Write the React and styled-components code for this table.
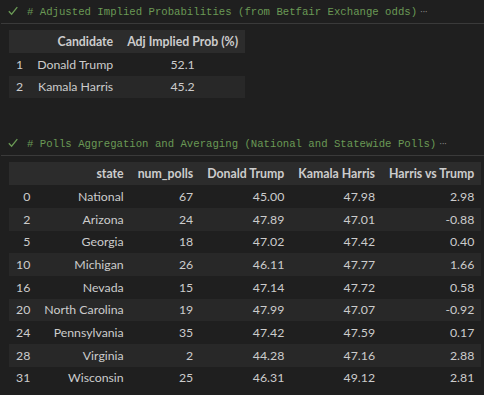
import React from 'react';
import styled, { createGlobalStyle } from 'styled-components';

const GlobalStyle = createGlobalStyle`
  html, body {
    margin: 0;
    padding: 0;
    background: #1f1f1f;
  }
  body {
    width: 484px;
    height: 395px;
    overflow: hidden;
  }
`;

const Page = styled.div`
  display: flex;
  flex-direction: column;
  gap: 34px;
`;

const Cell = styled.section`
  display: flex;
  flex-direction: column;
`;

const CellHeader = styled.div`
  display: flex;
  align-items: center;
  height: 23px;
  padding-left: 7px;
  border-bottom: 1px solid #3a3a3a;
  margin-left: 1px;
`;

const Check = styled.svg`
  width: 10px;
  height: 10px;
  margin-right: 9px;
  margin-top: -1px;
  flex-shrink: 0;
`;

const Comment = styled.span`
  font-family: 'Liberation Mono', 'DejaVu Sans Mono', monospace;
  font-size: 10.67px;
  color: #6a9955;
  white-space: pre;
`;

const More = styled.span`
  font-family: 'DejaVu Sans', sans-serif;
  font-size: 9px;
  color: #8a8a8a;
  margin-left: 3px;
  letter-spacing: -0.5px;
`;

const Output = styled.div`
  padding: 6px 0 0 9px;
`;

const Table = styled.table`
  border-collapse: collapse;
  font-family: Lato, 'Segoe UI', sans-serif;
  font-size: 12.3px;
  color: #cccccc;
`;

const Th = styled.th`
  background: #2c2c2c;
  font-weight: bold;
  text-align: ${(p) => p.align || 'right'};
  padding: 0 7px;
  height: 23px;
  white-space: nowrap;
`;

const Row = styled.tr`
  background: ${(p) => (p.striped ? '#282828' : 'transparent')};
`;

const Td = styled.td`
  text-align: ${(p) => p.align || 'right'};
  padding: 0 7px;
  height: 22.67px;
  white-space: nowrap;
`;

const CheckIcon = () => (
  <Check viewBox="0 0 10 10">
    <path d="M0.8 5.2 L3.6 8.2 L9.3 1.2" fill="none" stroke="#6a9955" strokeWidth="1.3" />
  </Check>
);

const NotebookCell = ({ comment, children }) => (
  <Cell>
    <CellHeader>
      <CheckIcon />
      <Comment>{comment}</Comment>
      <More>···</More>
    </CellHeader>
    <Output>{children}</Output>
  </Cell>
);

const odds = [
  ['1', 'Donald Trump', '52.1'],
  ['2', 'Kamala Harris', '45.2'],
];

const polls = [
  ['0', 'National', '67', '45.00', '47.98', '2.98'],
  ['2', 'Arizona', '24', '47.89', '47.01', '-0.88'],
  ['5', 'Georgia', '18', '47.02', '47.42', '0.40'],
  ['10', 'Michigan', '26', '46.11', '47.77', '1.66'],
  ['16', 'Nevada', '15', '47.14', '47.72', '0.58'],
  ['20', 'North Carolina', '19', '47.99', '47.07', '-0.92'],
  ['24', 'Pennsylvania', '35', '47.42', '47.59', '0.17'],
  ['28', 'Virginia', '2', '44.28', '47.16', '2.88'],
  ['31', 'Wisconsin', '25', '46.31', '49.12', '2.81'],
];

const App = () => (
  <>
    <GlobalStyle />
    <Page>
      <NotebookCell comment="# Adjusted Implied Probabilities (from Betfair Exchange odds)">
        <Table>
          <thead>
            <tr>
              <Th />
              <Th>Candidate</Th>
              <Th align="center">Adj Implied Prob (%)</Th>
            </tr>
          </thead>
          <tbody>
            {odds.map((r, i) => (
              <Row key={r[0]} striped={i % 2 === 1}>
                <Td align="center">{r[0]}</Td>
                <Td>{r[1]}</Td>
                <Td align="center">{r[2]}</Td>
              </Row>
            ))}
          </tbody>
        </Table>
      </NotebookCell>
      <NotebookCell comment="# Polls Aggregation and Averaging (National and Statewide Polls)">
        <Table>
          <thead>
            <tr>
              <Th />
              <Th>state</Th>
              <Th>num_polls</Th>
              <Th>Donald Trump</Th>
              <Th>Kamala Harris</Th>
              <Th>Harris vs Trump</Th>
            </tr>
          </thead>
          <tbody>
            {polls.map((r, i) => (
              <Row key={r[0]} striped={i % 2 === 1}>
                {r.map((v, j) => (
                  <Td key={j}>{v}</Td>
                ))}
              </Row>
            ))}
          </tbody>
        </Table>
      </NotebookCell>
    </Page>
  </>
);

export default App;
